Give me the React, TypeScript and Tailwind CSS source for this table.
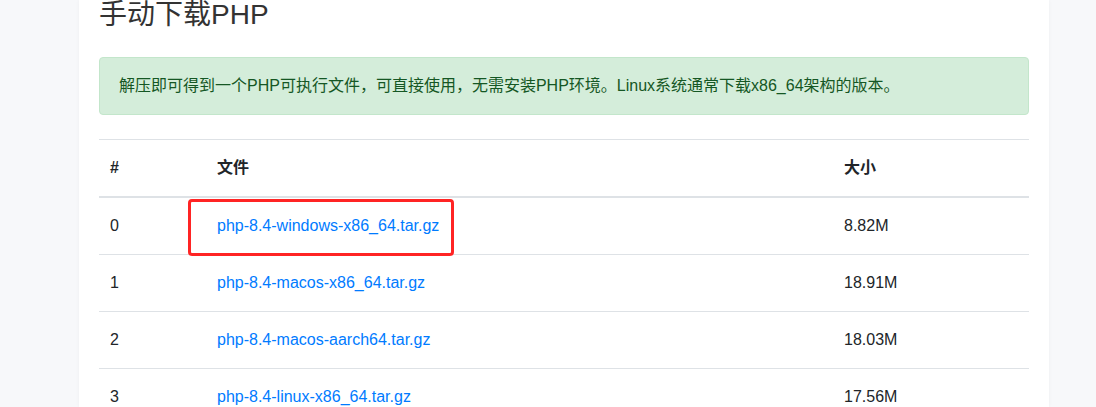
import React from "react";

const rows = [
  { n: "0", f: "php-8.4-windows-x86_64.tar.gz", s: "8.82M" },
  { n: "1", f: "php-8.4-macos-x86_64.tar.gz", s: "18.91M" },
  { n: "2", f: "php-8.4-macos-aarch64.tar.gz", s: "18.03M" },
  { n: "3", f: "php-8.4-linux-x86_64.tar.gz", s: "17.56M" },
];

export default function App() {
  return (
    <div
      className="flex h-[407px] w-full overflow-hidden bg-[#f7f8fa]"
      style={{ fontFamily: '"Liberation Sans", "Noto Sans CJK SC", sans-serif' }}
    >
      <div className="ml-[79px] w-[970px] bg-white px-[20px] shadow-[0_0_4px_rgba(0,0,0,0.04)]">
        <h3 className="mt-[-2px] text-[28px] leading-[34px] font-normal text-[#333]">手动下载PHP</h3>
        <div className="mt-[25px] flex h-[58px] items-center rounded-[4px] border border-[#c3e6cb] bg-[#d4edda] px-[19px] text-[16px] text-[#155724]">
          解压即可得到一个PHP可执行文件，可直接使用，无需安装PHP环境。Linux系统通常下载x86_64架构的版本。
        </div>
        <div className="mt-[24px] text-[16px] text-[#212529]">
          <div className="flex h-[59px] items-center border-t border-b-2 border-[#dee2e6] font-bold">
            <div className="w-[106px] pl-[11px]">#</div>
            <div className="w-[627px] pl-[12px]">文件</div>
            <div className="flex-1 pl-[12px]">大小</div>
          </div>
          {rows.map((r, i) => (
            <div
              key={r.n}
              className={
                i === 0
                  ? "relative z-10 flex h-[56px] items-center"
                  : "relative flex h-[57px] items-center border-t border-[#dee2e6]"
              }
            >
              <div className="w-[106px] pl-[11px]">{r.n}</div>
              <div className="w-[627px] pl-[12px]">
                <a className="text-[#007bff]">{r.f}</a>
              </div>
              <div className="flex-1 pl-[12px]">{r.s}</div>
              {i === 0 && (
                <div className="absolute left-[89px] top-[1px] h-[57px] w-[266px] rounded-[4px] border-[3px] border-[#ff2424]" />
              )}
            </div>
          ))}
        </div>
      </div>
    </div>
  );
}
